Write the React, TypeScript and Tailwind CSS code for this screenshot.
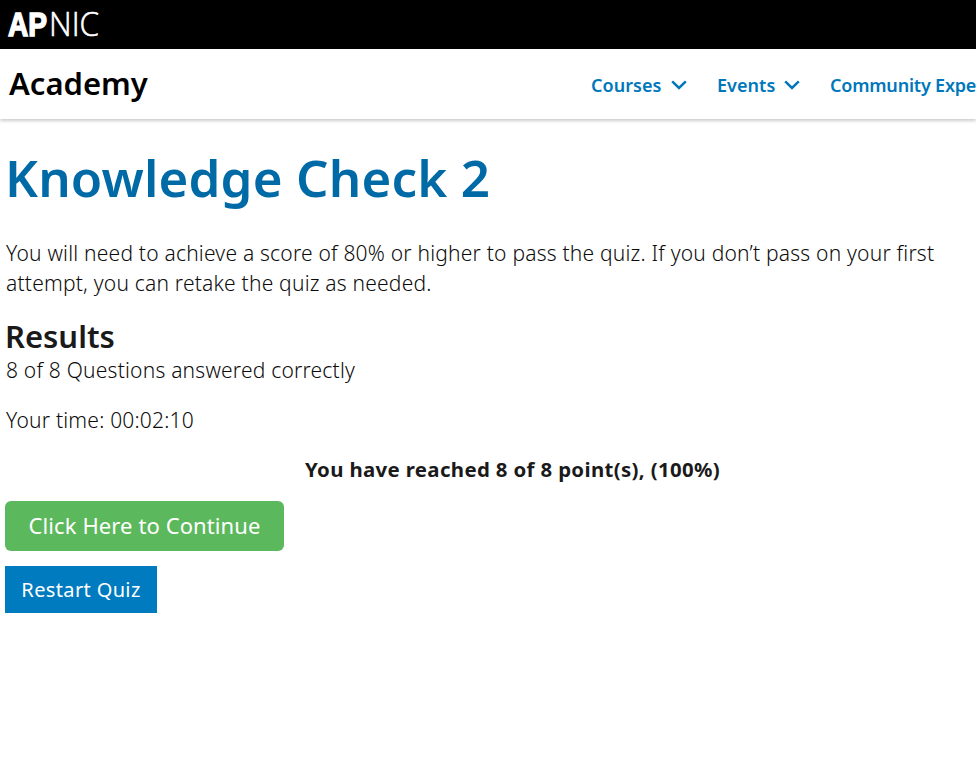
import React from "react";

function Chevron() {
  return (
    <svg width="16" height="10" viewBox="0 0 16 10" fill="none" className="ml-[9px]">
      <path d="M1.2 1.3 8 7.9 14.8 1.3" stroke="#0077bb" strokeWidth="2.5" />
    </svg>
  );
}

function Logo() {
  return (
    <svg width="110" height="49" className="block" fill="#fff" role="img" aria-label="APNIC">
      <text x="8" y="36" fontSize="33" textLength="39" lengthAdjust="spacingAndGlyphs" stroke="#fff" strokeWidth="1.5" className="font-['Liberation_Sans',sans-serif] font-bold">AP</text>
      <text x="49" y="36.4" fontSize="33" textLength="50" lengthAdjust="spacingAndGlyphs" stroke="#fff" strokeWidth="0.6" className="font-['Open_Sans',sans-serif] font-light">NIC</text>
    </svg>
  );
}

export default function App() {
  return (
    <div className="h-[780px] w-[976px] overflow-hidden whitespace-nowrap bg-white font-['Noto_Sans','Open_Sans',sans-serif] text-[#1a1a1a]">
      <div className="h-[49px] bg-black">
        <Logo />
      </div>
      <header className="flex h-[70px] justify-between bg-white shadow-[0_2px_3px_0_rgba(0,0,0,0.2)]">
        <div className="pl-[9px] pt-[12px] text-[31px] leading-[44px] font-semibold text-black">Academy</div>
        <nav className="flex w-[385px] items-start pt-[24px] text-[18px] leading-6 font-semibold tracking-[-0.2px] text-[#0077bb]">
          <a className="flex w-[126px] shrink-0 items-center tracking-[0.05px]">Courses<Chevron /></a>
          <a className="flex w-[113px] shrink-0 items-center tracking-[0.05px]">Events<Chevron /></a>
          <a className="shrink-0">Community Expe</a>
        </nav>
      </header>
      <main className="px-[5px] text-[21px] leading-[30px] font-light tracking-[0.21px]">
        <h1 className="pt-[28px] text-[51px] leading-[60px] font-semibold tracking-[0.15px] text-[#006aa7]">Knowledge Check 2</h1>
        <div className="text-[#0c0c0c]">
          <p className="mt-[31px] pl-px">You will need to achieve a score of 80% or higher to pass the quiz. If you don’t pass on your first<br />attempt, you can retake the quiz as needed.</p>
          <h2 className="mt-[19px] text-[31px] leading-[38px] font-semibold tracking-normal text-[#1a1a1a]">Results</h2>
          <p className="pl-px">8 of 8 Questions answered correctly</p>
          <p className="mt-5 pl-px">Your time: 00:02:10</p>
        </div>
        <p className="mt-[19px] pl-[300px] text-[20.4px] font-bold tracking-[0.35px]">You have reached 8 of 8 point(s), (100%)</p>
        <button className="mt-[17px] block h-[50px] w-[279px] rounded-md bg-[#5cb85c] pb-0.5 text-[22px] font-normal tracking-[0.1px] text-white">Click Here to Continue</button>
        <button className="mt-[15px] block h-[47px] w-[152px] bg-[#007bbf] text-[20px] font-normal tracking-[0.36px] text-white">Restart Quiz</button>
      </main>
    </div>
  );
}
